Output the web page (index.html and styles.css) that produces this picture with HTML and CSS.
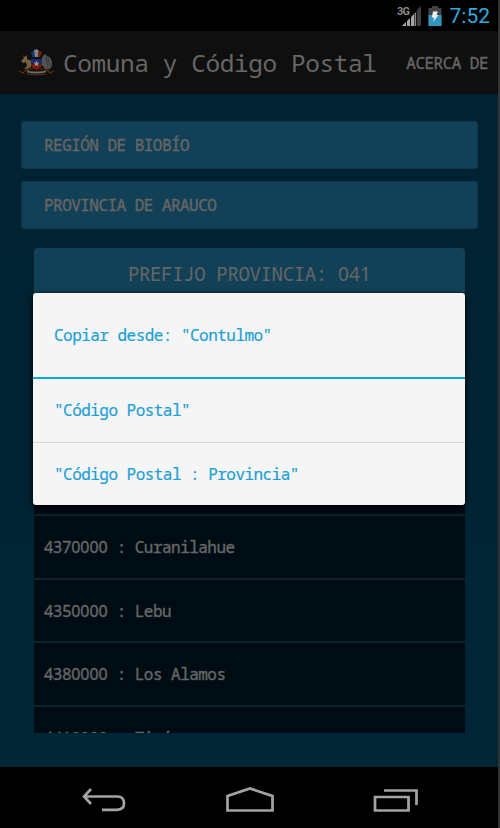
FILE: index.html
```html
<!DOCTYPE html>
<html lang="es">
<head>
  <meta charset="UTF-8" />
  <meta name="viewport" content="width=device-width, initial-scale=1.0" />
  <title>Comuna y Código Postal</title>
  <link rel="stylesheet" href="styles.css">
</head>
<body>
  <div class="phone">
    <div class="status-bar">
      <svg class="signal" width="25" height="22" viewBox="0 0 25 22">
        <text x="0" y="10" class="net">3G</text>
        <path d="M5 21L9 17V21Z M10 16L13 13V21H10Z M14 12L17 9V21H14Z" fill="#a5a5a5"/>
        <path d="M17.5 8.5L19 7V21H17.5Z" fill="#888"/>
        <path d="M19.700 5.500L24 1V21H19.700Z" fill="#3f3f3f"/>
      </svg>
      <svg class="battery" width="14" height="20" viewBox="0 0 14 20">
        <path d="M4 0H10V2H13.500V20H.5V2H4Z" fill="#444"/>
        <path d="M.5 9H13.500V20H.5Z" fill="#3294bd"/>
        <path d="M5 5.500H10L8.500 9H10.500L5.200 16L6.200 11.500H3.800Z" fill="#eee"/>
      </svg>
      <span class="clock">7:52</span>
    </div>

    <header class="action-bar">
      <svg class="logo" width="38" height="28" viewBox="0 0 38 28">
        <!-- plume -->
        <path d="M13 3L17 1L18 8H14Z" fill="#173377"/>
        <path d="M16 1Q19 -1 21 2L20 8H17Z" fill="#858585"/>
        <path d="M20 3Q23 1 24 4L22 8H20Z" fill="#7b1d12"/>
        <!-- huemul and condor -->
        <path d="M5 6L6 9L3 12L5 14L8 13L9 17L6 20H9L13 18V12L9 10L9 6L7 8Z" fill="#77633b"/>
        <path d="M24 8L27 5L29 7Q34 8 34 15Q34 19 31 20L27 20L24 16Z" fill="#505356"/>
        <path d="M28 8L30 18M30 9L32 17" stroke="#38393b" fill="none"/>
        <!-- shield -->
        <path d="M13 10H24V14.500H13Z" fill="#132f70"/>
        <path d="M13 14.500H24V16Q23 20 18.500 21Q14 20 13 16Z" fill="#761c12"/>
        <path d="M18.500 11.500L19.300 13.800H21.500L19.700 15L20.400 17.200L18.500 15.900L16.600 17.200L17.300 15L15.500 13.800H17.700Z" fill="#a0a0a0"/>
        <!-- ribbon -->
        <path d="M1 22L5 24L8 21L12 22.500H25L29 21L32 24L36 22M7 20H15M22 20H31M9 25L18 26L28 25" stroke="#4e3412" stroke-width="1.200" fill="none"/>
        <path d="M9 22.500Q18 25 28 22.500" stroke="#707070" stroke-width="1.500" fill="none"/>
      </svg>
      <h1>Comuna y Código Postal</h1>
      <span class="menu-item">ACERCA DE</span>
    </header>

    <main class="content">
      <div class="spinner">REGIÓN DE BIOBÍO</div>
      <div class="spinner">PROVINCIA DE ARAUCO</div>

      <section class="results">
        <div class="prefix">PREFIJO PROVINCIA: <span class="num">041</span></div>
        <ul class="rows">
          <li><span class="num">4370000</span> : Curanilahue</li>
          <li><span class="num">4350000</span> : Lebu</li>
          <li><span class="num">4380000</span> : Los Alamos</li>
          <li><span class="num">4410000</span> : Tirúa</li>
        </ul>
      </section>
    </main>

    <nav class="nav-bar">
      <svg width="44" height="26" viewBox="0 0 44 26">
        <path d="M9 2L2 9.500L9 17M3 9.500H35Q42 9.500 42 16.300Q42 22.800 35 22.800H20"/>
      </svg>
      <svg width="48" height="26" viewBox="0 0 48 26">
        <path d="M1.500 23.500V9L24 1.500L46.500 9V23.500Z"/>
      </svg>
      <svg width="46" height="26" viewBox="0 0 46 26">
        <path d="M2 10H35.500V23.500H2ZM11 3.500H43.500V18"/>
      </svg>
    </nav>

    <div class="dialog">
      <div class="dialog-title">Copiar desde: "Contulmo"</div>
      <div class="dialog-item">"Código Postal"</div>
      <div class="dialog-item">"Código Postal : Provincia"</div>
    </div>
  </div>
</body>
</html>
```

FILE: styles.css
```css
:root {
  --dim-text: #666;
  --panel: #124157;
  --blue: #1d9fd8;
  --mono: 'Droid Sans Mono', 'Noto Sans Mono', 'DejaVu Sans Mono', monospace;
}
* {
  margin: 0;
  padding: 0;
  box-sizing: border-box;
}
body {
  width: 500px;
  height: 828px;
  background: #333;
  font-family: var(--mono);
  font-size: 16px;
  letter-spacing: -0.53px;
  overflow: hidden;
}
.phone {
  position: relative;
  display: flex;
  flex-direction: column;
  width: 498px;
  height: 828px;
  background: #000;
}
.num {
  font-family: 'Noto Sans', sans-serif;
  letter-spacing: -0.07px;
}

/* status bar */
.status-bar {
  display: flex;
  justify-content: flex-end;
  align-items: center;
  height: 31px;
  padding-right: 8px;
}
.signal {
  margin-right: 6px;
}
.net {
  font: bold 11px Roboto, sans-serif;
  fill: #888;
  letter-spacing: -0.7px;
}
.battery {
  margin-right: 8px;
}
.clock {
  padding-top: 2px;
  font-family: Roboto, sans-serif;
  font-size: 21px;
  line-height: 31px;
  letter-spacing: 0;
  color: #33a9db;
}

/* action bar */
.action-bar {
  display: flex;
  align-items: center;
  height: 63px;
  padding: 2px 10px 0 18px;
  background: #0f0f0f;
  border-bottom: 1px solid #0a0a0a;
}
.action-bar h1 {
  flex: 1;
  margin-left: 7px;
  padding-bottom: 2px;
  font-size: 24.4px;
  font-weight: normal;
  letter-spacing: -0.38px;
  white-space: nowrap;
  color: var(--dim-text);
}
.menu-item {
  color: var(--dim-text);
  -webkit-text-stroke: 0.4px;
}

/* content */
.content {
  flex: 1;
  display: flex;
  flex-direction: column;
  gap: 12px;
  padding: 27px 20px 34px 21px;
  background: linear-gradient(#002232, #002636);
  overflow: hidden;
}
.spinner {
  flex: none;
  height: 48px;
  padding-left: 22px;
  line-height: 46px;
  color: var(--dim-text);
  background: var(--panel);
  border: 1px solid #0d384b;
  border-radius: 3px;
  -webkit-text-stroke: 0.4px;
}
.results {
  flex: 1;
  display: flex;
  flex-direction: column;
  min-height: 0;
  margin: 7px 13px 0;
  overflow: hidden;
  border-radius: 4px 4px 0 0;
}
.prefix {
  flex: none;
  height: 52px;
  line-height: 53px;
  text-align: center;
  font-size: 19px;
  letter-spacing: -0.35px;
  color: var(--dim-text);
  background: var(--panel);
}
.prefix .num {
  letter-spacing: 0.18px;
}
.rows {
  flex: 1;
  padding-top: 214px;
  list-style: none;
  background: #000c14;
  overflow: hidden;
}
.rows li {
  height: 63.5px;
  padding-left: 10px;
  line-height: 62px;
  white-space: pre;
  color: var(--dim-text);
  border-top: 2px solid #0c2430;
  -webkit-text-stroke: 0.4px;
}
.rows .num {
  display: inline-block;
  line-height: 60px;
}

/* navigation bar */
.nav-bar {
  display: flex;
  justify-content: space-between;
  height: 61px;
  padding: 20px 79px 0 82px;
}
.nav-bar path {
  fill: none;
  stroke: #a3a3a3;
  stroke-width: 2.7;
}

/* copy dialog */
.dialog {
  position: absolute;
  top: 293px;
  left: 33px;
  width: 432px;
  height: 212px;
  color: var(--blue);
  background: #f5f5f5;
  border-radius: 3px;
  box-shadow: 0 4px 9px rgba(0, 0, 0, 0.8), 0 0 2px #000;
  -webkit-text-stroke: 0.2px;
}
.dialog-title {
  height: 86px;
  padding-left: 21px;
  line-height: 84px;
  border-bottom: 2px solid #0bacdf;
}
.dialog-item {
  height: 63px;
  padding-left: 21px;
  line-height: 62px;
}
.dialog-item + .dialog-item {
  border-top: 1px solid #d5d5d5;
}
```
